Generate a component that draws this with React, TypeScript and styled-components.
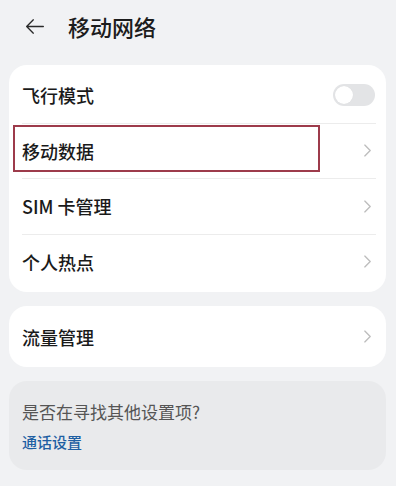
import styled, { createGlobalStyle } from "styled-components";

const GlobalStyle = createGlobalStyle`
  html, body {
    margin: 0;
    padding: 0;
    background: #f1f2f4;
  }
  body {
    font-family: "Noto Sans CJK SC", "Noto Sans", sans-serif;
    color: #1a1a1a;
  }
`;

const rows = [
  { name: "飞行模式", type: "switch" },
  { name: "移动数据", type: "link", marked: true },
  { name: "SIM 卡管理", type: "link" },
  { name: "个人热点", type: "link" },
];

const App = () => {
  return (
    <Page>
      <GlobalStyle />
      <Header>
        <BackIcon viewBox="0 0 24 20">
          <path d="M22 10H2M10 2L2 10l8 8" />
        </BackIcon>
        <h1 className="title">移动网络</h1>
      </Header>
      <Card>
        {rows.map((val, i) => (
          <Row key={val.name} $last={i === rows.length - 1}>
            {val.marked && <Mark />}
            <span className="name">{val.name}</span>
            {val.type === "switch" ? <Switch /> : <Chevron />}
          </Row>
        ))}
      </Card>
      <Card>
        <Row $last $tall>
          <span className="name">流量管理</span>
          <Chevron />
        </Row>
      </Card>
      <Hint>
        <p className="question">是否在寻找其他设置项?</p>
        <a className="link">通话设置</a>
      </Hint>
    </Page>
  );
};

const Chevron = () => (
  <ChevronIcon viewBox="0 0 10 16">
    <path d="M2 2l6 6-6 6" />
  </ChevronIcon>
);

export default App;

const Page = styled.div`
  display: flex;
  flex-direction: column;
  padding: 0 10px 0 9px;
  gap: 14px;
  width: 396px;
  box-sizing: border-box;
`;

const Header = styled.div`
  display: flex;
  align-items: center;
  height: 52px;
  padding-left: 16px;
  gap: 23px;
  margin-bottom: -1px;
  .title {
    margin: 0;
    font-size: 22px;
    font-weight: 500;
    color: #1c1c1c;
    line-height: 1;
  }
`;

const BackIcon = styled.svg`
  width: 20px;
  height: 17px;
  fill: none;
  stroke: #2a2a2a;
  stroke-width: 1.6;
  stroke-linecap: round;
  stroke-linejoin: round;
`;

const Card = styled.div`
  display: flex;
  flex-direction: column;
  background: #ffffff;
  border-radius: 18px;
  padding: 3px 0;
`;

const Row = styled.div<{ $last?: boolean; $tall?: boolean }>`
  position: relative;
  display: flex;
  align-items: center;
  justify-content: space-between;
  height: ${({ $tall }) => ($tall ? "55px" : "54.5px")};
  margin: 0 10px 0 13px;
  padding: 0 4px 0 0;
  border-bottom: ${({ $last }) => ($last ? "none" : "1px solid #ececec")};
  .name {
    font-size: 18px;
    font-weight: 500;
    color: #1a1a1a;
  }
`;

const Mark = styled.div`
  position: absolute;
  left: -9px;
  top: 1px;
  width: 307px;
  height: 47px;
  border: 2px solid #9d3b4b;
  box-sizing: border-box;
  pointer-events: none;
`;

const Switch = styled.div`
  position: relative;
  width: 42px;
  height: 22px;
  border-radius: 11px;
  background: #e3e4e6;
  margin-right: -3px;
  &::before {
    content: "";
    position: absolute;
    left: 2px;
    top: 2px;
    width: 18px;
    height: 18px;
    border-radius: 50%;
    background: #ffffff;
    box-shadow: 0 0 1px rgba(0, 0, 0, 0.08);
  }
`;

const ChevronIcon = styled.svg`
  width: 9px;
  height: 15px;
  fill: none;
  stroke: #bdbdbd;
  stroke-width: 1.5;
  stroke-linecap: round;
  stroke-linejoin: round;
`;

const Hint = styled.div`
  display: flex;
  flex-direction: column;
  background: #e9eaec;
  border-radius: 18px;
  padding: 20px 13px 18px;
  gap: 9px;
  .question {
    margin: 0;
    font-size: 17px;
    color: #555555;
    line-height: 22px;
  }
  .link {
    font-size: 15px;
    font-weight: 500;
    color: #1f5fa3;
    line-height: 20px;
  }
`;
